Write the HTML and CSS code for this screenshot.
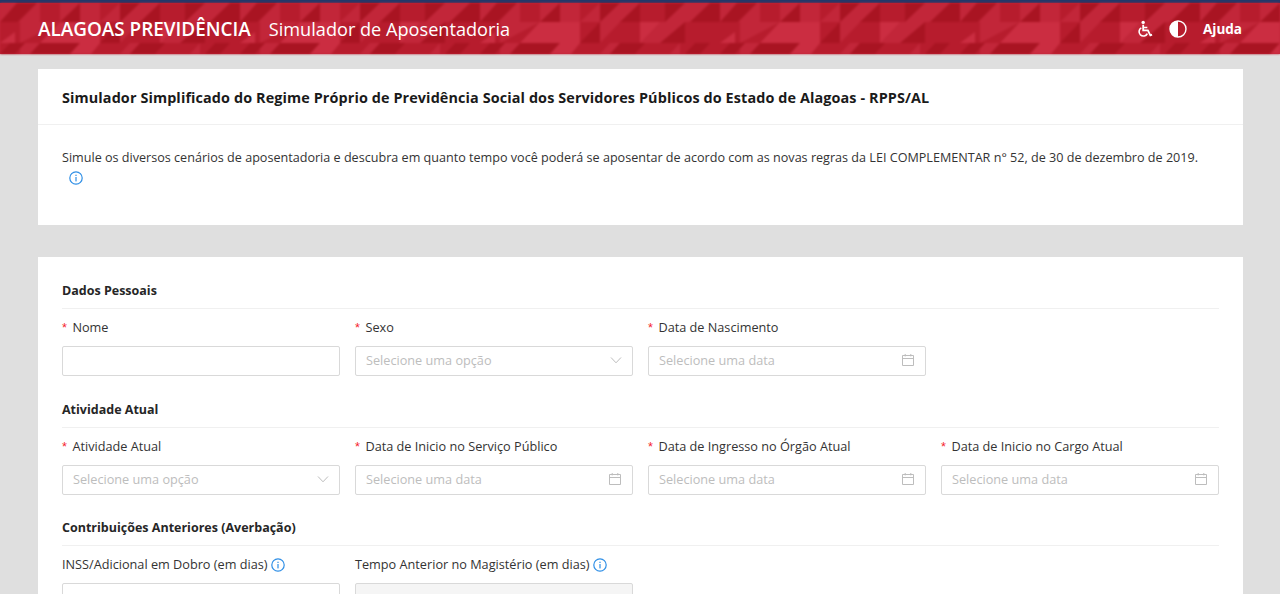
FILE: index.html
```html
<!DOCTYPE html>
<html lang="pt-BR">
<head>
<meta charset="utf-8">
<title>Simulador de Aposentadoria</title>
<link rel="stylesheet" href="styles.css">
</head>
<body>
<svg width="0" height="0" class="defs">
  <defs>
    <symbol id="i-info" viewBox="0 0 14 14">
      <circle cx="7" cy="7" r="6.2" fill="none" stroke="currentColor" stroke-width="1.2"/>
      <rect x="6.4" y="6" width="1.2" height="4.4" fill="currentColor"/>
      <rect x="6.4" y="3.7" width="1.2" height="1.3" fill="currentColor"/>
    </symbol>
    <symbol id="i-down" viewBox="0 0 12 12">
      <path d="M1 3.5 6 8.8 11 3.5" fill="none" stroke="currentColor" stroke-width="1"/>
    </symbol>
    <symbol id="i-cal" viewBox="0 0 14 14">
      <path d="M1.5 2.5h11v10h-11zM1.5 5.5h11M4.2 1v2.4M9.8 1v2.4" fill="none" stroke="currentColor" stroke-width="1"/>
    </symbol>
    <pattern id="tile" width="240" height="51" patternUnits="userSpaceOnUse">
      <rect width="240" height="51" fill="#c22639"/>
      <path fill="#b71c2d" d="M40 0h20v19H40zM100 0h20L100 19zM160 0h25v19h-25zM0 19h20v21H0zM20 40 60 19v21zM120 40l20-21h20v21zM100 19h20v21h-20zM205 19h35v21h-35zM0 40h20v11H0zM60 40h40v11H60zM100 40h30l-10 11H90zM140 40h30l-10 11h-30zM170 40h30l-10 11h-30zM200 40h40v11h-40z"/>
      <path fill="#a91422" d="M17 0h20L18 19H0zM60 19 80 0v19zM120 0h20l-20 19zM140 19 160 0v19zM185 0h20L185 19zM210 19 230 0h10v19zM120 19l-20 21h20zM180 40l25-21v21zM0 51l10-11h15L15 51zM30 51l10-11h40L70 51zM130 51l10-11h25l-10 11zM205 51l10-11h15l-10 11z"/>
      <path fill="#cb2d41" d="M60 19h40v21H40zM0 40l15-11v11zM160 19h20l-20 21zM80 40h20l-9 11H70z"/>
    </pattern>
  </defs>
</svg>

<header class="topbar">
  <svg class="topbar-bg" aria-hidden="true"><rect width="100%" height="100%" fill="url(#tile)"/></svg>
  <div class="brand">
    <span class="brand-name">ALAGOAS PREVIDÊNCIA</span>
    <span class="brand-sub">Simulador de Aposentadoria</span>
  </div>
  <nav class="tools">
    <svg class="tool-wheel" viewBox="0 0 18 18" aria-label="Acessibilidade">
      <circle cx="7.6" cy="2" r="1.8" fill="#fff"/>
      <path d="M7.6 4.5v6h5l2.6 5.2 1.8-.8" fill="none" stroke="#fff" stroke-width="1.9"/>
      <path d="M7.6 7.4h4.4" fill="none" stroke="#fff" stroke-width="1.6"/>
      <path d="M5.6 7.8a4.6 4.6 0 1 0 6.4 6" fill="none" stroke="#fff" stroke-width="1.7"/>
    </svg>
    <svg class="tool-contrast" viewBox="0 0 18 18" aria-label="Contraste">
      <circle cx="9" cy="9" r="8" fill="none" stroke="#fff" stroke-width="1.4"/>
      <path d="M9 1a8 8 0 0 0 0 16z" fill="#fff"/>
    </svg>
    <span class="tool-help">Ajuda</span>
  </nav>
</header>

<main class="page">
  <section class="card">
    <h1 class="card-title">Simulador Simplificado do Regime Próprio de Previdência Social dos Servidores Públicos do Estado de Alagoas - RPPS/AL</h1>
    <div class="card-intro">
      <p>Simule os diversos cenários de aposentadoria e descubra em quanto tempo você poderá se aposentar de acordo com as novas regras da LEI COMPLEMENTAR n° 52, de 30 de dezembro de 2019.</p>
      <svg class="info info-intro"><use href="#i-info"/></svg>
    </div>
  </section>

  <section class="card card-form">
    <h2 class="section-title">Dados Pessoais</h2>
    <div class="grid">
      <div class="field">
        <label class="label"><span class="req">*</span>Nome</label>
        <input class="control" type="text">
      </div>
      <div class="field">
        <label class="label"><span class="req">*</span>Sexo</label>
        <div class="control"><span class="ph">Selecione uma opção</span><svg class="caret"><use href="#i-down"/></svg></div>
      </div>
      <div class="field">
        <label class="label"><span class="req">*</span>Data de Nascimento</label>
        <div class="control"><span class="ph">Selecione uma data</span><svg class="cal"><use href="#i-cal"/></svg></div>
      </div>
    </div>

    <h2 class="section-title">Atividade Atual</h2>
    <div class="grid">
      <div class="field">
        <label class="label"><span class="req">*</span>Atividade Atual</label>
        <div class="control"><span class="ph">Selecione uma opção</span><svg class="caret"><use href="#i-down"/></svg></div>
      </div>
      <div class="field">
        <label class="label"><span class="req">*</span>Data de Inicio no Serviço Público</label>
        <div class="control"><span class="ph">Selecione uma data</span><svg class="cal"><use href="#i-cal"/></svg></div>
      </div>
      <div class="field">
        <label class="label"><span class="req">*</span>Data de Ingresso no Órgão Atual</label>
        <div class="control"><span class="ph">Selecione uma data</span><svg class="cal"><use href="#i-cal"/></svg></div>
      </div>
      <div class="field">
        <label class="label"><span class="req">*</span>Data de Inicio no Cargo Atual</label>
        <div class="control"><span class="ph">Selecione uma data</span><svg class="cal"><use href="#i-cal"/></svg></div>
      </div>
    </div>

    <h2 class="section-title">Contribuições Anteriores (Averbação)</h2>
    <div class="grid">
      <div class="field">
        <label class="label">INSS/Adicional em Dobro (em dias)<svg class="info"><use href="#i-info"/></svg></label>
        <input class="control" type="text">
      </div>
      <div class="field">
        <label class="label">Tempo Anterior no Magistério (em dias)<svg class="info"><use href="#i-info"/></svg></label>
        <div class="control control-off"></div>
      </div>
    </div>
  </section>
</main>
</body>
</html>
```

FILE: styles.css
```css
* { box-sizing: border-box; }
html, body { margin: 0; height: 594px; overflow: hidden; }
body {
  background: #dfdfdf;
  font-family: "Open Sans", "Liberation Sans", sans-serif;
  font-size: 12.6px;
  color: #333;
}
.defs { position: absolute; }

.topbar {
  position: relative;
  height: 54px;
  border-top: 3px solid #22386a;
  background: #c22639;
  display: flex;
  align-items: center;
  justify-content: space-between;
  padding: 0 38px;
  color: #fff;
}
.topbar-bg {
  position: absolute;
  left: 0;
  top: 0;
  width: 100%;
  height: 51px;
  filter: blur(0.8px);
}
.brand, .tools { position: relative; display: flex; align-items: center; }
.brand { gap: 18px; }
.brand-name { font-size: 18.9px; font-weight: 600; }
.brand-sub { font-size: 18.15px; font-weight: 500; }
.tool-wheel { width: 17px; height: 18px; margin-right: 16px; }
.tool-contrast { width: 18px; height: 18px; margin-right: 16px; }
.tool-help { font-size: 13.5px; font-weight: 700; }

.page { padding: 15px 37px 0 38px; display: flex; flex-direction: column; gap: 32px; }
.card { background: #fff; }
.card-title {
  margin: 0;
  height: 56px;
  padding: 2px 24px 0;
  display: flex;
  align-items: center;
  border-bottom: 1px solid #f0f0f0;
  font-size: 14.4px;
  font-weight: 700;
  letter-spacing: 0.11px;
  color: #1a1a1a;
}
.card-intro { height: 100px; padding: 22px 24px 0; line-height: 21px; }
.card-intro p { margin: 0; }
.info { width: 14px; height: 14px; color: #2f8fe6; margin-left: 4px; vertical-align: -2.5px; }
.info-intro { display: block; margin: 3px 0 0 7px; }

.card-form { padding: 24px; }
.section-title {
  margin: 0 0 8px;
  height: 28px;
  padding-bottom: 8px;
  line-height: 20px;
  border-bottom: 1px solid #f0f0f0;
  font-size: 12.5px;
  font-weight: 700;
  color: #262626;
}
.grid {
  display: grid;
  grid-template-columns: repeat(4, 278px);
  column-gap: 15px;
  margin-bottom: 23.5px;
}
.field { display: flex; flex-direction: column; gap: 9px; }
.label { display: block; height: 20px; line-height: 20px; font-size: 12.7px; }
.req { color: #f5222d; margin-right: 5.5px; font-family: "Liberation Sans", sans-serif; }
.control {
  display: flex;
  align-items: center;
  justify-content: space-between;
  width: 100%;
  height: 30px;
  padding: 0 10px 2px;
  border: 1px solid #d9d9d9;
  border-radius: 2px;
  background: #fff;
  font: inherit;
}
.control-off { background: #f5f5f5; }
.ph { color: #bdbdbd; font-size: 12.7px; }
.caret { width: 12px; height: 12px; color: #bdbdbd; }
.cal { width: 14px; height: 14px; color: #bdbdbd; }
```
